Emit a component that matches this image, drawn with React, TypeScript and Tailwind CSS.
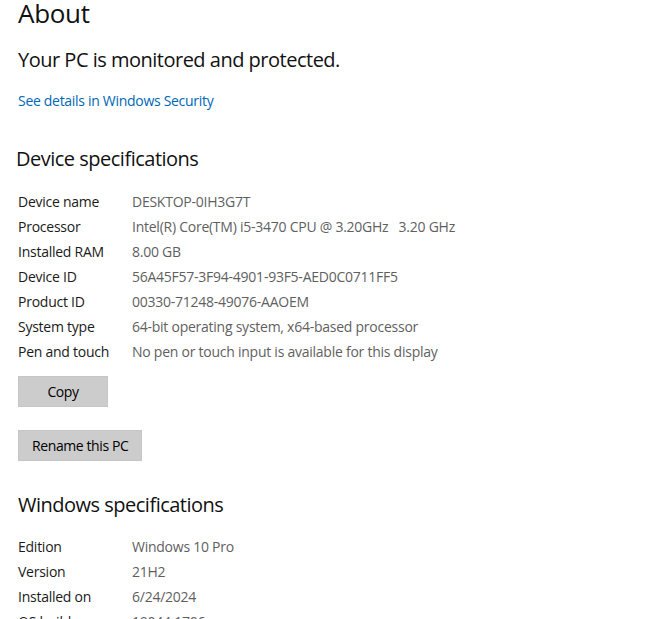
const deviceSpecs: [string, string][] = [
  ["Device name", "DESKTOP-0IH3G7T"],
  ["Processor", "Intel(R) Core(TM) i5-3470 CPU @ 3.20GHz   3.20 GHz"],
  ["Installed RAM", "8.00 GB"],
  ["Device ID", "56A45F57-3F94-4901-93F5-AED0C0711FF5"],
  ["Product ID", "00330-71248-49076-AAOEM"],
  ["System type", "64-bit operating system, x64-based processor"],
  ["Pen and touch", "No pen or touch input is available for this display"],
];

const windowsSpecs: [string, string][] = [
  ["Edition", "Windows 10 Pro"],
  ["Version", "21H2"],
  ["Installed on", "6/24/2024"],
  ["OS build", "19044.1706"],
];

function SpecRows({ rows }: { rows: [string, string][] }) {
  return (
    <div className="flex flex-col">
      {rows.map(([label, value]) => (
        <div key={label} className="flex h-[25px] items-center text-[14px] tracking-[-0.25px]">
          <span className="w-[114px] shrink-0 text-[#1a1a1a]">{label}</span>
          <span className="whitespace-pre text-[#5f5f5f]">{value}</span>
        </div>
      ))}
    </div>
  );
}

function GrayButton({ children }: { children: React.ReactNode }) {
  return (
    <button className="h-[31px] w-fit border border-[#c6c6c6] bg-[#cccccc] px-[13px] text-[14px] tracking-[-0.4px] text-black">
      {children}
    </button>
  );
}

export default function App() {
  return (
    <div
      className="h-[619px] w-[657px] overflow-hidden bg-white pl-[18px]"
      style={{ fontFamily: '"Open Sans", "Noto Sans", sans-serif' }}
    >
      <h1 className="-mt-[5px] text-[26px] leading-[36px] font-normal tracking-[-0.3px] text-[#111]">
        About
      </h1>
      <p className="mt-[15px] text-[20px] leading-[28px] tracking-[-0.5px] text-[#111]">
        Your PC is monitored and protected.
      </p>
      <a className="mt-[17px] block text-[14px] leading-[20px] tracking-[-0.3px] text-[#0067b8]">
        See details in Windows Security
      </a>
      <h2 className="mt-[34px] -ml-[2px] text-[20px] leading-[28px] tracking-[-0.5px] text-[#111]">
        Device specifications
      </h2>
      <div className="mt-[16px]">
        <SpecRows rows={deviceSpecs} />
      </div>
      <div className="mt-[12px] flex flex-col gap-[23px]">
        <GrayButton>
          <span className="block w-[62px] text-center">Copy</span>
        </GrayButton>
        <GrayButton>Rename this PC</GrayButton>
      </div>
      <h2 className="mt-[30px] text-[20px] leading-[28px] tracking-[-0.5px] text-[#111]">
        Windows specifications
      </h2>
      <div className="mt-[15px]">
        <SpecRows rows={windowsSpecs} />
      </div>
    </div>
  );
}
